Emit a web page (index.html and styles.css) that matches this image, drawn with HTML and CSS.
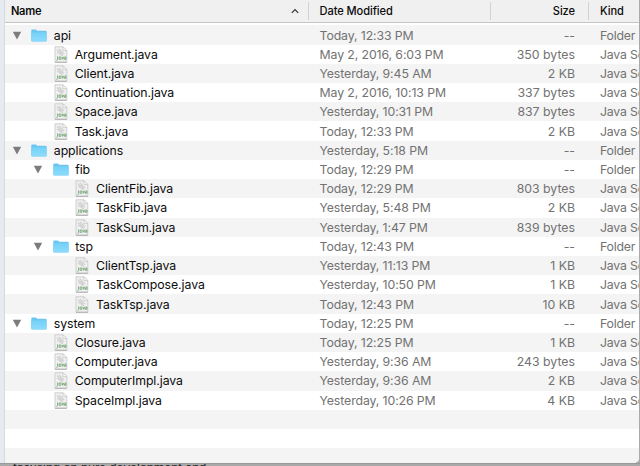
FILE: index.html
```html
<!DOCTYPE html>
<html lang="en">
<head>
<meta charset="utf-8">
<title>Files</title>
<link rel="stylesheet" href="styles.css">
</head>
<body>
<svg class="defs" width="0" height="0" aria-hidden="true">
  <defs>
    <linearGradient id="blue" x1="0" y1="0" x2="0" y2="1"><stop offset="0" stop-color="#74d0f8"/><stop offset="1" stop-color="#8cdcfb"/></linearGradient>
    <symbol id="arrow" viewBox="0 0 10 9"><path d="M.8 .8H9.2L5 8.4Z" fill="#7c7c7c"/></symbol>
    <symbol id="folder" viewBox="0 0 16 13"><path d="M.3 1.2Q.3 .4 1.1 .4H4.8L6.2 1.7H14.7Q15.6 1.7 15.6 2.6V11.6Q15.6 12.5 14.7 12.5H1.2Q.3 12.5 .3 11.6Z" fill="#6cc5ee"/><path d="M.4 3.2H15.5V11.7Q15.5 12.3 14.8 12.3H1.1Q.4 12.3 .4 11.7Z" fill="url(#blue)"/></symbol>
    <symbol id="java" viewBox="0 0 14 17"><path d="M1 .8H9L12.8 4.6V16.2H1Z" fill="#f0f0f0" stroke="#c5c5c5" stroke-width=".8"/><path d="M9 .8V4.6H12.8Z" fill="#fff" stroke="#c0c0c0" stroke-width=".7"/><path d="M3 3.5L8.5 8.5M3 6L9 10M5 3L10 8" stroke="#d2d2d2" stroke-width="1.3"/><path d="M3.6 10.3V13.5Q3.6 14.5 2.4 14.3M7 11H5.1V13.3H7V11M8 10.8L8.8 13.3L9.7 10.8M10.4 11H12V13.3H10.4V12H12" fill="none" stroke="#78a97a" stroke-width=".9"/><path d="M1 16.3H12.8" stroke="#a4a4a4" stroke-width=".8"/></symbol>
  </defs>
</svg>
<div class="screen">
  <div class="sidebar"></div>
  <main class="window">
    <header class="row head"><div class="name">Name<svg class="sort" viewBox="0 0 8 6"><path d="M.8 4.8L4 1.5L7.2 4.8" fill="none" stroke="#333" stroke-width="1.2"/></svg></div><div class="date">Date Modified</div><div class="size">Size</div><div class="kind">Kind</div></header>
    <div class="list">
      <div class="row"><div class="name"><svg class="arrow"><use href="#arrow"/></svg><svg class="folder"><use href="#folder"/></svg>api</div><div class="date">Today, 12:33 PM</div><div class="size">--</div><div class="kind">Folder</div></div>
      <div class="row"><div class="name l1"><svg class="java"><use href="#java"/></svg>Argument.java</div><div class="date">May 2, 2016, 6:03 PM</div><div class="size">350 bytes</div><div class="kind">Java So</div></div>
      <div class="row"><div class="name l1"><svg class="java"><use href="#java"/></svg>Client.java</div><div class="date">Yesterday, 9:45 AM</div><div class="size">2 KB</div><div class="kind">Java So</div></div>
      <div class="row"><div class="name l1"><svg class="java"><use href="#java"/></svg>Continuation.java</div><div class="date">May 2, 2016, 10:13 PM</div><div class="size">337 bytes</div><div class="kind">Java So</div></div>
      <div class="row"><div class="name l1"><svg class="java"><use href="#java"/></svg>Space.java</div><div class="date">Yesterday, 10:31 PM</div><div class="size">837 bytes</div><div class="kind">Java So</div></div>
      <div class="row"><div class="name l1"><svg class="java"><use href="#java"/></svg>Task.java</div><div class="date">Today, 12:33 PM</div><div class="size">2 KB</div><div class="kind">Java So</div></div>
      <div class="row"><div class="name"><svg class="arrow"><use href="#arrow"/></svg><svg class="folder"><use href="#folder"/></svg>applications</div><div class="date">Yesterday, 5:18 PM</div><div class="size">--</div><div class="kind">Folder</div></div>
      <div class="row"><div class="name l1"><svg class="arrow"><use href="#arrow"/></svg><svg class="folder"><use href="#folder"/></svg>fib</div><div class="date">Today, 12:29 PM</div><div class="size">--</div><div class="kind">Folder</div></div>
      <div class="row"><div class="name l2"><svg class="java"><use href="#java"/></svg>ClientFib.java</div><div class="date">Today, 12:29 PM</div><div class="size">803 bytes</div><div class="kind">Java So</div></div>
      <div class="row"><div class="name l2"><svg class="java"><use href="#java"/></svg>TaskFib.java</div><div class="date">Yesterday, 5:48 PM</div><div class="size">2 KB</div><div class="kind">Java So</div></div>
      <div class="row"><div class="name l2"><svg class="java"><use href="#java"/></svg>TaskSum.java</div><div class="date">Yesterday, 1:47 PM</div><div class="size">839 bytes</div><div class="kind">Java So</div></div>
      <div class="row"><div class="name l1"><svg class="arrow"><use href="#arrow"/></svg><svg class="folder"><use href="#folder"/></svg>tsp</div><div class="date">Today, 12:43 PM</div><div class="size">--</div><div class="kind">Folder</div></div>
      <div class="row"><div class="name l2"><svg class="java"><use href="#java"/></svg>ClientTsp.java</div><div class="date">Yesterday, 11:13 PM</div><div class="size">1 KB</div><div class="kind">Java So</div></div>
      <div class="row"><div class="name l2"><svg class="java"><use href="#java"/></svg>TaskCompose.java</div><div class="date">Yesterday, 10:50 PM</div><div class="size">1 KB</div><div class="kind">Java So</div></div>
      <div class="row"><div class="name l2"><svg class="java"><use href="#java"/></svg>TaskTsp.java</div><div class="date">Today, 12:43 PM</div><div class="size">10 KB</div><div class="kind">Java So</div></div>
      <div class="row"><div class="name"><svg class="arrow"><use href="#arrow"/></svg><svg class="folder"><use href="#folder"/></svg>system</div><div class="date">Today, 12:25 PM</div><div class="size">--</div><div class="kind">Folder</div></div>
      <div class="row"><div class="name l1"><svg class="java"><use href="#java"/></svg>Closure.java</div><div class="date">Today, 12:25 PM</div><div class="size">1 KB</div><div class="kind">Java So</div></div>
      <div class="row"><div class="name l1"><svg class="java"><use href="#java"/></svg>Computer.java</div><div class="date">Yesterday, 9:36 AM</div><div class="size">243 bytes</div><div class="kind">Java So</div></div>
      <div class="row"><div class="name l1"><svg class="java"><use href="#java"/></svg>ComputerImpl.java</div><div class="date">Yesterday, 9:36 AM</div><div class="size">2 KB</div><div class="kind">Java So</div></div>
      <div class="row"><div class="name l1"><svg class="java"><use href="#java"/></svg>SpaceImpl.java</div><div class="date">Yesterday, 10:26 PM</div><div class="size">4 KB</div><div class="kind">Java So</div></div>
      <div class="row"></div>
      <div class="row"></div>
      <div class="row"></div>
    </div>
  </main>
  <div class="edge"></div>
</div>
<footer class="behind">focusing on pure development and</footer>
</body>
</html>
```
FILE: styles.css
```css
* { box-sizing: border-box; }
html, body { height: 100%; overflow: hidden; }
body {
  margin: 0;
  background: #a9a9a9;
  font: 12.3px/19px Inter, "Liberation Sans", sans-serif;
  color: #0c0c0c;
}
.defs { position: absolute; }
.screen { display: flex; height: 464px; border-bottom: 1px solid #999; background: #a9a9a9; }
.sidebar { width: 5px; flex: none; background: #e5ebf1; border-right: 1px solid #d3dae1; }
.window { flex: 1; min-width: 0; overflow: hidden; background: #fff; border-bottom-right-radius: 5px; }
.edge { width: 1px; flex: none; background: #aaa; }
.row {
  display: grid;
  grid-template-columns: 302.5px 182.5px 98px 1fr;
  align-items: center;
  height: 19.22px;
  white-space: nowrap;
}
.list { padding-top: 2.4px; }
.list .row:nth-child(odd) { background: #f4f4f4; }
.row > div { height: 100%; display: flex; align-items: center; overflow: hidden; }
.name { padding-left: 6.8px; letter-spacing: -.07px; }
.l1 { padding-left: 28.2px; }
.l2 { padding-left: 49.5px; }
.date { padding-left: 12px; }
.size { justify-content: flex-end; padding-right: 13px; }
.kind { padding-left: 12px; }
.list .date, .list .size, .list .kind { color: #727272; }
.list .date { letter-spacing: -.1px; }
.list .kind { letter-spacing: -.2px; }
.head {
  height: 23px;
  background: #f0f0f0;
  border-bottom: 1px solid #c4c4c4;
  font-size: 11.1px;
  font-weight: 500;
}
.head .name { font-weight: 600; justify-content: space-between; padding: 0 8.5px 0 6px; letter-spacing: -.3px; }
.head .date, .head .size, .head .kind {
  background: linear-gradient(#d2d2d2, #d2d2d2) 0 2px / 1px 18px no-repeat;
  letter-spacing: -.08px;
}
.sort { width: 8px; height: 6px; }
.arrow { width: 10px; height: 9px; margin-right: 9.5px; flex: none; }
.folder { width: 16px; height: 13px; margin-right: 6.5px; flex: none; }
.java { width: 14px; height: 17px; margin: 0 7px 0 20.5px; flex: none; }
.behind { height: 2px; overflow: hidden; padding-left: 13px; font: 12.6px/9px "Liberation Sans", sans-serif; color: #222; }
```
